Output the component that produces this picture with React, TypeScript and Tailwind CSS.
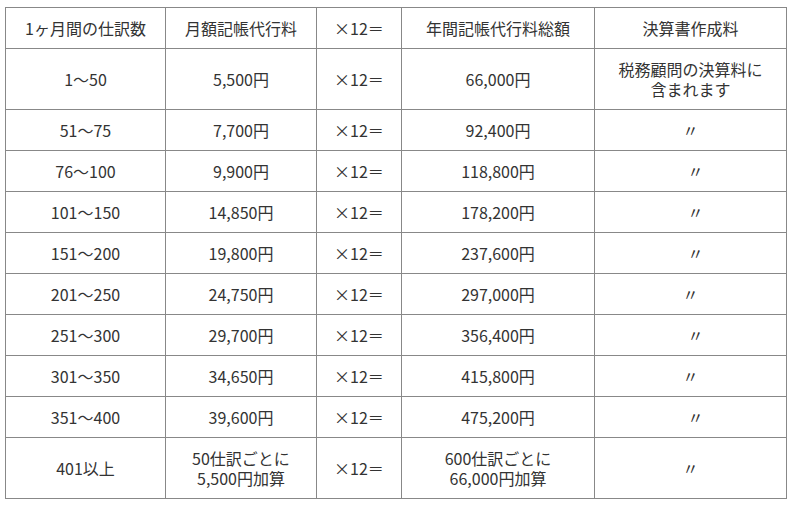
const rows: [string, string, string, string, boolean][] = [
  ["51～75", "7,700円", "92,400円", "〃", false],
  ["76～100", "9,900円", "118,800円", "〃", true],
  ["101～150", "14,850円", "178,200円", "〃", true],
  ["151～200", "19,800円", "237,600円", "〃", true],
  ["201～250", "24,750円", "297,000円", "〃", false],
  ["251～300", "29,700円", "356,400円", "〃", true],
  ["301～350", "34,650円", "415,800円", "〃", false],
  ["351～400", "39,600円", "475,200円", "〃", true],
];

const cell = "border border-[#888] text-center align-middle px-2";

export default function App() {
  return (
    <div
      className="bg-white w-[794px] h-[505px] pl-[5px] pt-[7px] text-[16px] leading-[20px] text-[#333]"
      style={{ fontFamily: '"Noto Sans CJK JP", "Noto Sans", sans-serif' }}
    >
      <table className="border-collapse table-fixed w-[781px]">
        <colgroup>
          <col className="w-[160px]" />
          <col className="w-[151px]" />
          <col className="w-[85px]" />
          <col className="w-[193px]" />
          <col className="w-[192px]" />
        </colgroup>
        <tbody>
          <tr className="h-[41px]">
            <td className={cell}>1ヶ月間の仕訳数</td>
            <td className={cell}>月額記帳代行料</td>
            <td className={cell}>×12＝</td>
            <td className={cell}>年間記帳代行料総額</td>
            <td className={cell}>決算書作成料</td>
          </tr>
          <tr className="h-[61px]">
            <td className={cell}>1～50</td>
            <td className={cell}>5,500円</td>
            <td className={cell}>×12＝</td>
            <td className={cell}>66,000円</td>
            <td className={cell}>
              税務顧問の決算料に
              <br />
              含まれます
            </td>
          </tr>
          {rows.map(([count, monthly, yearly, settle, shifted]) => (
            <tr key={count} className="h-[41px]">
              <td className={cell}>{count}</td>
              <td className={cell}>{monthly}</td>
              <td className={cell}>×12＝</td>
              <td className={cell}>{yearly}</td>
              <td className={cell}>
                <span className={shifted ? "pl-[10px]" : ""}>{settle}</span>
              </td>
            </tr>
          ))}
          <tr className="h-[61px]">
            <td className={cell}>401以上</td>
            <td className={cell}>
              50仕訳ごとに
              <br />
              5,500円加算
            </td>
            <td className={cell}>×12＝</td>
            <td className={cell}>
              600仕訳ごとに
              <br />
              66,000円加算
            </td>
            <td className={cell}>〃</td>
          </tr>
        </tbody>
      </table>
    </div>
  );
}
